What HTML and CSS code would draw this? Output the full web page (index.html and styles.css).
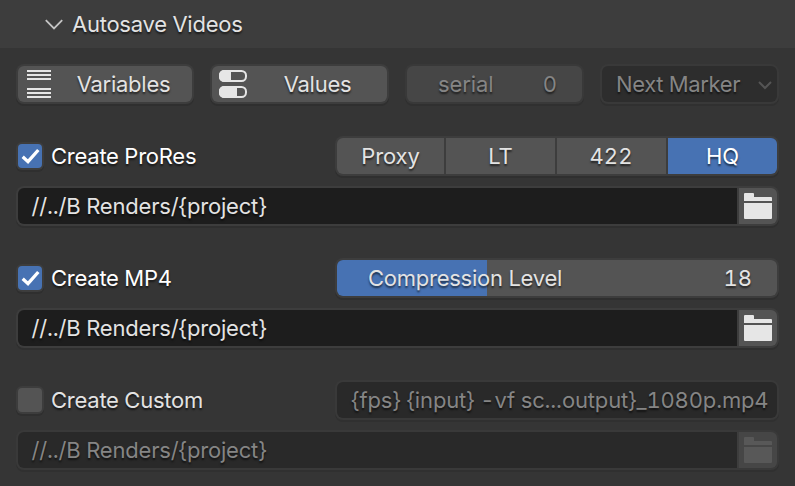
FILE: index.html
```html
<!DOCTYPE html>
<html lang="en">
<head>
<meta charset="utf-8">
<title>Autosave Videos</title>
<link rel="stylesheet" href="styles.css">
</head>
<body>
<svg width="0" height="0" class="defs">
  <symbol id="folder" viewBox="0 0 28 26">
    <path d="M1 0h8a1 1 0 0 1 1 1v3h17a1 1 0 0 1 1 1v3H0V1a1 1 0 0 1 1-1zM0 10h28v15a1 1 0 0 1-1 1H1a1 1 0 0 1-1-1z"/>
  </symbol>
  <symbol id="check" viewBox="0 0 24 24">
    <path d="M4.700 12.800 10 17.700 20.300 6" fill="none" stroke="#fff" stroke-width="3.300"/>
  </symbol>
</svg>
<main class="panel">
  <header class="header">
    <svg class="chevron" viewBox="0 0 18 11"><path d="M.8 1.200 9 9.400l8.200-8.200" fill="none" stroke="#c4c4c4" stroke-width="1.800"/></svg>
    <h1 class="title">Autosave Videos</h1>
  </header>
  <div class="body">
    <div class="tools">
      <button class="box button">
        <svg class="icon lines" viewBox="0 0 24 28"><path d="M0 1h24M0 5h24M0 9h24M0 19h24M0 23h24M0 27h24" stroke="#e6e6e6" stroke-width="2"/></svg>
        <span class="caption">Variables</span>
      </button>
      <button class="box button">
        <svg class="icon toggles" viewBox="0 0 28 28"><g fill="none" stroke="#e6e6e6" stroke-width="2"><rect x="1" y="1" width="26" height="10" rx="4.500"/><rect x="1" y="17" width="26" height="10" rx="4.500"/></g><path d="M5 0h7v12H5a5 5 0 0 1-5-5V5a5 5 0 0 1 5-5zM5 16h13v12H5a5 5 0 0 1-5-5v-2a5 5 0 0 1 5-5z" fill="#e6e6e6"/></svg>
        <span class="caption">Values</span>
      </button>
      <div class="box number off"><span>serial</span><span>0</span></div>
      <div class="box select off"><span class="next">Next Marker</span><svg class="arrow" viewBox="0 0 14 9"><path d="M1 1l6 6 6-6" fill="none" stroke="#555" stroke-width="2"/></svg></div>
    </div>

    <section class="group">
      <div class="row">
        <label class="option lit"><span class="checkbox on"><svg viewBox="0 0 24 24"><use href="#check"/></svg></span><span>Create ProRes</span></label>
        <div class="box segments"><span>Proxy</span><span>LT</span><span class="digits">422</span><span class="active">HQ</span></div>
      </div>
      <div class="box path"><span class="value">//../B Renders/{project}</span><span class="browse"><svg><use href="#folder"/></svg></span></div>
    </section>

    <section class="group">
      <div class="row">
        <label class="option lit"><span class="checkbox on"><svg viewBox="0 0 24 24"><use href="#check"/></svg></span><span>Create MP4</span></label>
        <div class="box slider"><span class="level">Compression Level</span><span class="digits">18</span></div>
      </div>
      <div class="box path"><span class="value">//../B Renders/{project}</span><span class="browse"><svg><use href="#folder"/></svg></span></div>
    </section>

    <section class="group">
      <div class="row">
        <label class="option"><span class="checkbox"></span><span>Create Custom</span></label>
        <div class="box command off"><span>{fps} {input} -vf sc...output}_1080p.mp4</span></div>
      </div>
      <div class="box path off"><span class="value">//../B Renders/{project}</span><span class="browse"><svg><use href="#folder"/></svg></span></div>
    </section>
  </div>
</main>
</body>
</html>
```
FILE: styles.css
```css
* { box-sizing: border-box; }
body {
  margin: 0;
  background: #353535;
  color: #e3e3e3;
  font: 22px/36px Inter, "Liberation Sans", sans-serif;
  font-variant-numeric: tabular-nums;
  letter-spacing: -.25px;
  text-shadow: 0 2px 2px rgba(0, 0, 0, .6);
  white-space: nowrap;
}
.defs { position: absolute; }
svg { display: block; flex: none; }
.panel { width: 795px; height: 486px; overflow: hidden; }
.header {
  display: flex;
  align-items: center;
  height: 48px;
  padding-left: 45px;
  background: #3d3d3d;
}
.chevron { width: 18px; height: 11px; margin: 1px 9px 0 0; }
.title { margin: 0; font: inherit; }
.body { padding: 18px 18px 0; }
.box {
  height: 36px;
  border-radius: 6px;
  background: #545454;
  box-shadow: 0 0 0 2px #3d3d3d, 0 2px 0 2px #2f2f2f;
}
.off { color: #858585; }
.tools { display: grid; grid-template-columns: 174px 175px 175px 175px; gap: 20px; }
.button {
  display: flex;
  align-items: center;
  padding: 0;
  border: 0;
  color: inherit;
  font: inherit;
  letter-spacing: inherit;
  text-shadow: inherit;
}
.icon { height: 28px; }
.lines { width: 24px; margin-left: 9px; }
.toggles { width: 28px; margin-left: 7px; }
.caption { flex: 1; text-align: center; }
.lines + .caption { padding-left: 4px; }
.toggles + .caption { padding-left: 1px; }
.number { display: flex; justify-content: space-between; padding: 0 25px 0 31px; background: #464646; letter-spacing: -.1px; }
.select { display: flex; align-items: center; justify-content: space-between; padding: 0 5px 0 14px; background: #2d2d2d; letter-spacing: -.35px; }
.arrow { width: 14px; height: 9px; margin-top: 3px; }
.group { margin-top: 36px; }
.row { display: grid; grid-template-columns: 319px 440px; margin-bottom: 14px; }
.option { display: flex; align-items: center; gap: 9px; }
.lit { color: #fff; }
.checkbox {
  width: 24px;
  height: 24px;
  border-radius: 4px;
  background: #545454;
  box-shadow: 0 0 0 2px #3d3d3d, 0 2px 0 2px #2f2f2f;
}
.checkbox.on { background: #4772b3; }
.segments {
  display: grid;
  grid-template-columns: 107px 109px 109px 109px;
  gap: 2px;
  background: #3d3d3d;
  text-align: center;
  letter-spacing: -.1px;
}
.segments span { background: #545454; }
.segments span:first-child { border-radius: 6px 0 0 6px; }
.segments .active { border-radius: 0 6px 6px 0; background: #4772b3; color: #fff; }
.segments .digits { padding-right: 1px; }
.digits { letter-spacing: 0; }
.slider {
  display: flex;
  justify-content: space-between;
  padding: 0 25px 0 31px;
  background: linear-gradient(90deg, #4772b3 150px, #545454 150px);
}
.path { display: flex; width: 759px; background: #3d3d3d; }
.value {
  width: 719px;
  margin-right: 2px;
  padding-left: 13.5px;
  border-radius: 6px 0 0 6px;
  background: #1d1d1d;
  letter-spacing: -.18px;
}
.browse {
  display: flex;
  width: 38px;
  padding: 5px;
  border-radius: 0 6px 6px 0;
  background: #545454;
}
.browse svg { width: 28px; height: 26px; fill: #e6e6e6; }
.path.off .value { background: #292929; }
.path.off .browse { background: #464646; }
.path.off .browse svg { fill: #585858; }
.command { padding-left: 14px; background: #292929; letter-spacing: -.15px; }
.off.box { box-shadow: 0 0 0 2px #393939, 0 2px 0 2px #303030; }
```
